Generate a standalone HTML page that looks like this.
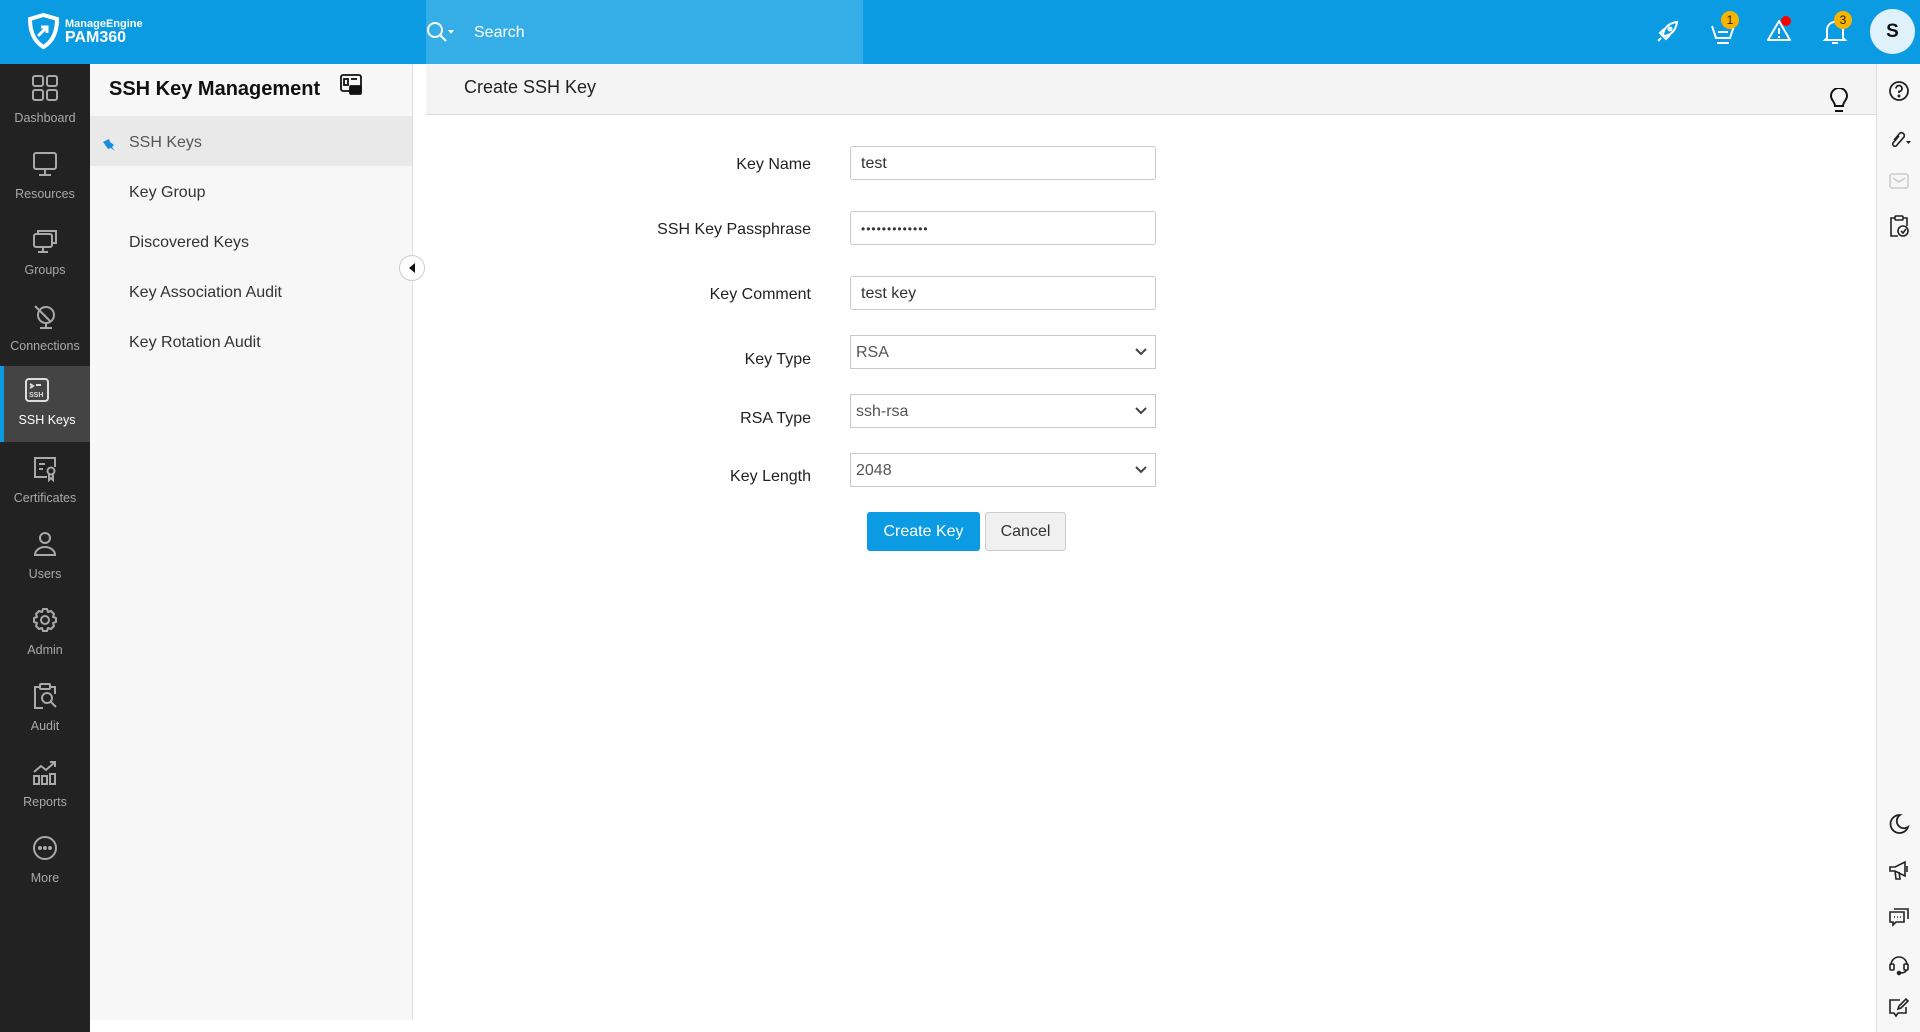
<!DOCTYPE html>
<html><head><meta charset="utf-8"><style>
*{box-sizing:border-box;margin:0;padding:0}
body{width:1920px;height:1032px;overflow:hidden;font-family:"Liberation Sans",sans-serif;background:#fff;position:relative;color:#222}
.abs{position:absolute}
#top{left:0;top:0;width:1920px;height:64px;background:#0a9be3}
#search{left:426px;top:0;width:437px;height:64px;background:#35aee8}
#side{left:0;top:64px;width:90px;height:968px;background:#222}
.si{position:absolute;left:0;width:90px;height:76px;text-align:center;color:#a9a9a9;font-size:12.5px}
.si svg{display:block;margin:10px auto 9px}
.si.act{background:#444;color:#fff;border-left:4px solid #0a9be3}
#panel{left:90px;top:64px;width:323px;height:956px;background:#f7f7f7;border-right:1px solid #e2e2e2}
.mi{position:absolute;left:0;width:322px;height:50px;line-height:54px;padding-left:39px;font-size:16px;color:#333}
#hdr{left:426px;top:64px;width:1450px;height:51px;background:#f4f4f4;border-bottom:1px solid #ddd}
#rail{left:1876px;top:64px;width:44px;height:968px;background:#f7f7f7;border-left:1px solid #ddd}
.lbl{position:absolute;width:300px;left:511px;text-align:right;font-size:16px;color:#222}
.inp{position:absolute;left:850px;width:306px;height:34px;border:1px solid #c9c9c9;border-radius:3px;font-size:16px;padding-left:10px;line-height:34px;color:#333}
.sel{border-radius:0;padding-left:5px;color:#555}
.sel svg{position:absolute;right:8px;top:12px}
.badge{position:absolute;width:18px;height:18px;border-radius:50%;background:#f7b500;color:#222;font-size:12px;text-align:center;line-height:18px}
</style></head><body>
<div id="top" class="abs"></div>
<div id="search" class="abs"></div>
<svg class="abs" style="left:27px;top:13px" width="33" height="37" viewBox="0 0 33 37"><path d="M16.5 2 L30 6 Q30 26 16.5 34 Q3 26 3 6 Z" fill="none" stroke="#fff" stroke-width="4"/><path d="M11 23 L20 14 M14 14 H20 V20" stroke="#fff" stroke-width="3" fill="none"/></svg>
<div class="abs" style="left:65px;top:18px;color:#fff;font-size:11px;font-weight:bold">ManageEngine</div>
<div class="abs" style="left:65px;top:29px;color:#fff;font-size:16px;font-weight:bold">PAM360</div>
<svg class="abs" style="left:426px;top:21px" width="30" height="24" viewBox="0 0 30 24"><circle cx="9" cy="9" r="7" fill="none" stroke="#fff" stroke-width="2"/><path d="M14 14 L20 20" stroke="#fff" stroke-width="2"/><path d="M22 9 h6 l-3 4z" fill="#fff"/></svg>
<div class="abs" style="left:474px;top:24px;color:#fff;font-size:16px">Search</div>
<svg class="abs" style="left:1654px;top:19px" width="26" height="26" viewBox="0 0 26 26" fill="none" stroke="#fff" stroke-width="2"><path d="M9 17 C9 9 15 4 23 3 C22 11 17 17 9 17Z M9 17 L6 14 L10 10 M9 17 L12 20 L16 16"/><circle cx="16" cy="10" r="1.5"/><path d="M4 22 L7 19"/></svg>
<svg class="abs" style="left:1710px;top:18px" width="26" height="28" viewBox="0 0 26 28" fill="none" stroke="#fff" stroke-width="2"><path d="M2 8 L6 20 H20 L24 8"/><path d="M8 14 H18"/><path d="M7 25 H19"/></svg>
<div class="badge" style="left:1721px;top:11px">1</div>
<svg class="abs" style="left:1766px;top:18px" width="26" height="26" viewBox="0 0 26 26" fill="none" stroke="#fff" stroke-width="2"><path d="M13 3 L24 22 H2 Z" stroke-linejoin="round"/><path d="M13 10 V16 M13 18 V20"/></svg>
<div class="abs" style="left:1781px;top:16px;width:10px;height:10px;border-radius:50%;background:#f00"></div>
<svg class="abs" style="left:1822px;top:18px" width="26" height="28" viewBox="0 0 26 28" fill="none" stroke="#fff" stroke-width="2"><path d="M5 20 V12 A8 8 0 0 1 21 12 V20 L23 22 H3Z"/><path d="M10 25 H16"/></svg>
<div class="badge" style="left:1834px;top:11px">3</div>
<div class="abs" style="left:1870px;top:9px;width:45px;height:45px;border-radius:50%;background:#dff1fb;text-align:center;line-height:45px;font-size:19px;font-weight:bold;color:#111">S</div>

<div id="side" class="abs">
<div class="si" style="top:0"><svg width="28" height="28" viewBox="0 0 28 28" fill="none" stroke="#a9a9a9" stroke-width="2"><rect x="2" y="2" width="10" height="10" rx="2"/><rect x="16" y="2" width="10" height="10" rx="2"/><rect x="2" y="16" width="10" height="10" rx="2"/><rect x="16" y="16" width="10" height="10" rx="2"/></svg>Dashboard</div>
<div class="si" style="top:76px"><svg width="28" height="28" viewBox="0 0 28 28" fill="none" stroke="#a9a9a9" stroke-width="2"><rect x="3" y="3" width="22" height="16" rx="2"/><path d="M14 19 V24 M8 25 H20"/></svg>Resources</div>
<div class="si" style="top:152px"><svg width="28" height="28" viewBox="0 0 28 28" fill="none" stroke="#a9a9a9" stroke-width="2"><rect x="3" y="8" width="18" height="13" rx="2"/><path d="M7 8 V5 H25 V17 H21 M12 21 V25 M7 26 H17"/></svg>Groups</div>
<div class="si" style="top:228px"><svg width="28" height="28" viewBox="0 0 28 28" fill="none" stroke="#a9a9a9" stroke-width="2"><circle cx="15" cy="13" r="8"/><path d="M4 4 L20 20 M15 21 V25 M9 26 H21"/></svg>Connections</div>
<div class="si act" style="top:302px;height:76px"><svg style="margin-left:19px" width="28" height="28" viewBox="0 0 28 28" fill="none" stroke="#ddd" stroke-width="2"><rect x="3" y="3" width="22" height="22" rx="3"/><path d="M7 8 L10 10 L7 12 M13 9 H18"/><text x="6" y="21" font-size="7" fill="#ddd" stroke="none" font-family="Liberation Sans" font-weight="bold">SSH</text></svg>SSH Keys</div>
<div class="si" style="top:380px"><svg width="28" height="28" viewBox="0 0 28 28" fill="none" stroke="#a9a9a9" stroke-width="2"><path d="M16 23 H4 V4 H24 V13"/><path d="M8 10 H14 M8 15 H12"/><circle cx="20" cy="17" r="3.5"/><path d="M18 20 V26 L20 24 L22 26 V20"/></svg>Certificates</div>
<div class="si" style="top:456px"><svg width="28" height="28" viewBox="0 0 28 28" fill="none" stroke="#a9a9a9" stroke-width="2"><circle cx="14" cy="8" r="5"/><path d="M4 25 A10 8 0 0 1 24 25 Z"/></svg>Users</div>
<div class="si" style="top:532px"><svg width="28" height="28" viewBox="0 0 28 28" fill="none" stroke="#a9a9a9" stroke-width="2"><circle cx="14" cy="14" r="4"/><path d="M12 3 H16 L17 6 L20 5 L23 8 L22 11 L25 12 V16 L22 17 L23 20 L20 23 L17 22 L16 25 H12 L11 22 L8 23 L5 20 L6 17 L3 16 V12 L6 11 L5 8 L8 5 L11 6 Z" stroke-linejoin="round"/></svg>Admin</div>
<div class="si" style="top:608px"><svg width="28" height="28" viewBox="0 0 28 28" fill="none" stroke="#a9a9a9" stroke-width="2"><path d="M8 5 H4 V26 H12 M20 5 H24 V12"/><rect x="9" y="2" width="10" height="5" rx="1"/><circle cx="16" cy="16" r="5"/><path d="M20 20 L25 25"/></svg>Audit</div>
<div class="si" style="top:684px"><svg width="28" height="28" viewBox="0 0 28 28" fill="none" stroke="#a9a9a9" stroke-width="2"><path d="M3 14 L10 8 L15 12 L24 4 M19 4 H24 V9"/><rect x="3" y="18" width="5" height="8"/><rect x="11" y="18" width="5" height="8"/><rect x="19" y="16" width="5" height="10"/></svg>Reports</div>
<div class="si" style="top:760px"><svg width="28" height="28" viewBox="0 0 28 28" fill="none" stroke="#a9a9a9" stroke-width="2"><circle cx="14" cy="14" r="11"/><circle cx="9" cy="14" r="1" fill="#a9a9a9"/><circle cx="14" cy="14" r="1" fill="#a9a9a9"/><circle cx="19" cy="14" r="1" fill="#a9a9a9"/></svg>More</div>
</div>

<div id="panel" class="abs">
<div class="abs" style="left:19px;top:14px;font-size:20px;font-weight:bold;color:#111">SSH Key Management</div>
<svg class="abs" style="left:249px;top:9px" width="24" height="24" viewBox="0 0 24 24" fill="none" stroke="#111" stroke-width="1.8"><rect x="2" y="2" width="20" height="16" rx="2"/><rect x="5" y="6" width="4" height="6"/><path d="M12 6 H18"/><rect x="11" y="13" width="11" height="8" rx="1" fill="#111"/></svg>
<div class="abs" style="left:0;top:52px;width:322px;height:1px;background:#e0e0e0"></div>
<div class="mi" style="top:52px;background:#e9e9e9;color:#555">SSH Keys</div>
<svg class="abs" style="left:12px;top:73px" width="16" height="14" viewBox="0 0 16 14"><path d="M1 5 L7 2 L8 5 L12 8 L10 10 L13 14 L9 11 L6 12 Z" fill="#1a8fe0"/></svg>
<div class="mi" style="top:102px">Key Group</div>
<div class="mi" style="top:152px">Discovered Keys</div>
<div class="mi" style="top:202px">Key Association Audit</div>
<div class="mi" style="top:252px">Key Rotation Audit</div>
</div>
<div class="abs" style="left:399px;top:255px;width:26px;height:26px;border-radius:50%;background:#fff;border:1px solid #ccc"></div>
<svg class="abs" style="left:407px;top:262px" width="10" height="12"><path d="M8 1 L2 6 L8 11Z" fill="#111"/></svg>

<div id="hdr" class="abs"><div class="abs" style="left:38px;top:13px;font-size:18px;color:#222">Create SSH Key</div></div>
<svg class="abs" style="left:1829px;top:88px" width="20" height="26" viewBox="0 0 20 26" fill="none" stroke="#111" stroke-width="2"><path d="M6 18 C6 14 2 12 2 8 A8 8 0 0 1 18 8 C18 12 14 14 14 18 Z"/><path d="M6 23 H14"/></svg>

<div id="rail" class="abs"></div>
<svg class="abs" style="left:1888px;top:80px" width="22" height="22" viewBox="0 0 22 22" fill="none" stroke="#222" stroke-width="1.8"><circle cx="11" cy="11" r="9"/><path d="M8 8.5 A3 3 0 1 1 11 11.5 V13"/><circle cx="11" cy="16" r=".6" fill="#222"/></svg>
<svg class="abs" style="left:1888px;top:128px" width="24" height="22" viewBox="0 0 24 22" fill="none" stroke="#222" stroke-width="1.6"><path d="M6 12 L12 5 A3 3 0 0 1 16 9 L9 17 A2 2 0 0 1 5 15 L11 8"/><path d="M18 13 h5 l-2.5 3z" fill="#222" stroke="none"/></svg>
<svg class="abs" style="left:1888px;top:172px" width="22" height="18" viewBox="0 0 22 18" fill="none" stroke="#ccc" stroke-width="1.6"><rect x="2" y="2" width="18" height="14" rx="2"/><path d="M5 6 L11 10 L17 6"/></svg>
<svg class="abs" style="left:1888px;top:214px" width="22" height="24" viewBox="0 0 22 24" fill="none" stroke="#222" stroke-width="1.6"><path d="M7 4 H3 V22 H10 M15 4 H19 V12"/><rect x="7" y="2" width="8" height="4" rx="1"/><circle cx="15" cy="17" r="5"/><path d="M13 17 L15 19 L18 15"/></svg>
<svg class="abs" style="left:1888px;top:813px" width="22" height="22" viewBox="0 0 22 22" fill="none" stroke="#222" stroke-width="1.8"><path d="M12 2 A9 9 0 1 0 20 14 A7 7 0 0 1 12 2Z"/></svg>
<svg class="abs" style="left:1888px;top:859px" width="22" height="22" viewBox="0 0 22 22" fill="none" stroke="#222" stroke-width="1.6"><path d="M2 8 H7 L17 3 V17 L7 12 H2 Z M7 12 L8 20 H12 L11 13 M19 7 V13"/></svg>
<svg class="abs" style="left:1888px;top:906px" width="22" height="22" viewBox="0 0 22 22" fill="none" stroke="#222" stroke-width="1.6"><path d="M2 6 H16 V16 H8 L5 19 V16 H2Z M6 3 H20 V13"/><path d="M6 11 h1 M9 11 h1 M12 11 h1"/></svg>
<svg class="abs" style="left:1888px;top:952px" width="22" height="24" viewBox="0 0 22 24" fill="none" stroke="#222" stroke-width="1.6"><path d="M3 13 A8 8 0 0 1 19 13"/><rect x="2" y="12" width="4" height="6" rx="1"/><rect x="16" y="12" width="4" height="6" rx="1"/><path d="M18 18 Q18 21 12 21"/><circle cx="11" cy="21" r="1.5" fill="#222"/></svg>
<svg class="abs" style="left:1888px;top:997px" width="22" height="22" viewBox="0 0 22 22" fill="none" stroke="#222" stroke-width="1.6"><path d="M12 3 H2 V16 H6 L8 19 L10 16 H18 V10"/><path d="M10 12 L11 9 L18 2 L20 4 L13 11 Z"/></svg>

<div class="lbl" style="top:156px">Key Name</div>
<div class="inp" style="top:146px">test</div>
<div class="lbl" style="top:221px">SSH Key Passphrase</div>
<div class="inp" style="top:211px;font-size:12px;letter-spacing:1px">•••••••••••••</div>
<div class="lbl" style="top:286px">Key Comment</div>
<div class="inp" style="top:276px">test key</div>
<div class="lbl" style="top:351px">Key Type</div>
<div class="inp sel" style="top:335px">RSA<svg width="12" height="8"><path d="M1 1 L6 6 L11 1" stroke="#444" stroke-width="2" fill="none"/></svg></div>
<div class="lbl" style="top:410px">RSA Type</div>
<div class="inp sel" style="top:394px">ssh-rsa<svg width="12" height="8"><path d="M1 1 L6 6 L11 1" stroke="#444" stroke-width="2" fill="none"/></svg></div>
<div class="lbl" style="top:468px">Key Length</div>
<div class="inp sel" style="top:453px">2048<svg width="12" height="8"><path d="M1 1 L6 6 L11 1" stroke="#444" stroke-width="2" fill="none"/></svg></div>
<div class="abs" style="left:867px;top:512px;width:113px;height:39px;background:#0a9be3;border-radius:3px;color:#fff;font-size:16px;text-align:center;line-height:40px">Create Key</div>
<div class="abs" style="left:985px;top:512px;width:81px;height:39px;background:#f0f0f0;border:1px solid #ccc;border-radius:3px;color:#333;font-size:16px;text-align:center;line-height:38px">Cancel</div>
</body></html>
